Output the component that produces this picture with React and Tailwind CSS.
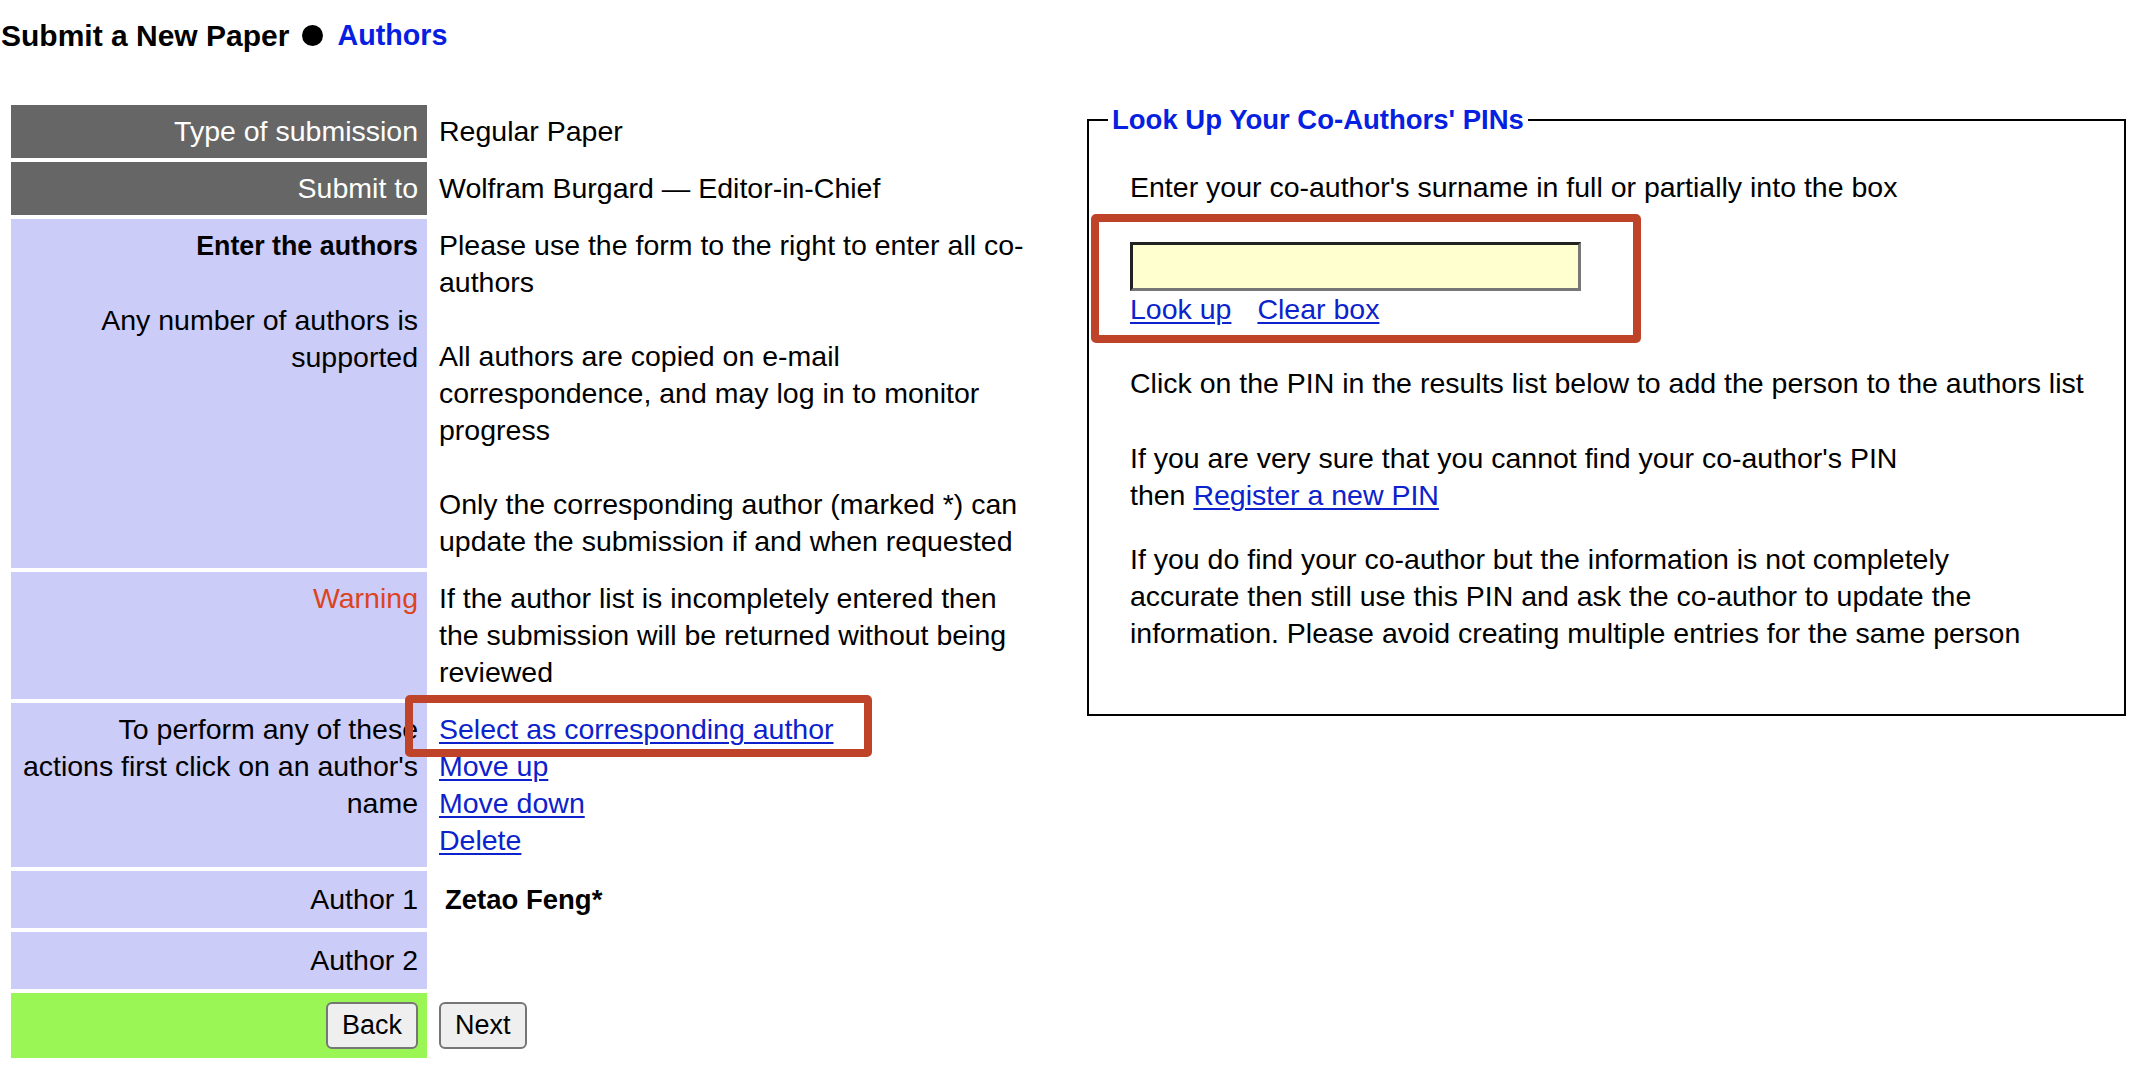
import React from "react";

const FONT = "font-['Liberation_Sans',Arial,Helvetica,sans-serif]";

function Label({ children, bg = "bg-[#ccccf8] text-black", className = "" }) {
  return (
    <div className={`${bg} text-right pr-[9px] pl-[8px] py-[7.8px] whitespace-nowrap ${className}`}>
      {children}
    </div>
  );
}

function Value({ children, className = "" }) {
  return <div className={`pl-[8px] py-[7.8px] whitespace-nowrap ${className}`}>{children}</div>;
}

function Link({ children, className = "" }) {
  return (
    <a href="#" className={`text-[#0b22cc] underline decoration-[2px] underline-offset-[3px] ${className}`}>
      {children}
    </a>
  );
}

export default function App() {
  return (
    <div className={`relative min-h-[1076px] w-[2146px] bg-white text-black text-[28.5px] leading-[37px] ${FONT}`}>
      <h1 className="flex items-center pt-[17px] pl-[1px] text-[30px] leading-[37px] font-bold">
        <span>Submit a New Paper</span>
        <span className="ml-[13px] mr-[14px] inline-block h-[21px] w-[21px] rounded-full bg-black" aria-label="●" />
        <span className="text-[28.7px] text-[#0520e0]">Authors</span>
      </h1>

      <div className="mt-[51px] flex items-start">
        {/* Left table */}
        <div className="ml-[11px] grid w-[1076px] grid-cols-[416px_1fr] gap-x-[4px] gap-y-[4.4px]">
          <Label bg="bg-[#666666] text-white">Type of submission</Label>
          <Value>Regular Paper</Value>

          <Label bg="bg-[#666666] text-white">Submit to</Label>
          <Value>Wolfram Burgard — Editor-in-Chief</Value>

          <Label>
            <span className="text-[26.8px] font-bold">Enter the authors</span>
            <br />
            <br />
            Any number of authors is
            <br />
            supported
          </Label>
          <Value>
            Please use the form to the right to enter all co-
            <br />
            authors
            <br />
            <br />
            All authors are copied on e-mail
            <br />
            correspondence, and may log in to monitor
            <br />
            progress
            <br />
            <br />
            Only the corresponding author (marked *) can
            <br />
            update the submission if and when requested
          </Value>

          <Label>
            <span className="text-[#dc4420]">Warning</span>
          </Label>
          <Value>
            If the author list is incompletely entered then
            <br />
            the submission will be returned without being
            <br />
            reviewed
          </Value>

          <Label>
            To perform any of these
            <br />
            actions first click on an author's
            <br />
            name
          </Label>
          <Value className="flex flex-col items-start">
            <Link>Select as corresponding author</Link>
            <Link>Move up</Link>
            <Link>Move down</Link>
            <Link>Delete</Link>
          </Value>

          <Label className="flex h-[56.7px] items-center justify-end">Author 1</Label>
          <div className="flex h-[56.7px] items-center pl-[14px] text-[27.5px] font-bold">Zetao Feng*</div>

          <Label className="flex h-[56.7px] items-center justify-end">Author 2</Label>
          <div className="h-[56.7px]" />

          <div className="flex h-[64.7px] items-center justify-end bg-[#99f655] pr-[9px]">
            <button className="h-[47px] rounded-[6px] border-[2px] border-[#767676] bg-[#efefef] px-[14px] text-[27px] leading-none">
              Back
            </button>
          </div>
          <div className="flex h-[64.7px] items-center pl-[8px]">
            <button className="h-[47px] rounded-[6px] border-[2px] border-[#767676] bg-[#efefef] px-[14px] text-[27px] leading-none">
              Next
            </button>
          </div>
        </div>

        {/* Right fieldset */}
        <fieldset className="mt-[-4px] w-[1039px] border-2 border-black pl-[19px] pr-[20px] pb-[62px]">
          <legend className="px-[4px] text-[27.5px] font-bold text-[#0520e0]">Look Up Your Co-Authors' PINs</legend>
          <div className="pl-[22px] pt-[31px] whitespace-nowrap">
            <div>Enter your co-author's surname in full or partially into the box</div>
            <input
              type="text"
              className="mt-[36px] block h-[49px] w-[451px] border-[3px] border-t-[#222222] border-l-[#222222] border-r-[#777777] border-b-[#777777] bg-[#ffffd0] outline-none"
            />
            <div className="flex gap-[26px]">
              <Link>Look up</Link>
              <Link>Clear box</Link>
            </div>
            <div className="mt-[37px]">
              Click on the PIN in the results list below to add the person to the authors list
            </div>
            <div className="mt-[38px]">
              If you are very sure that you cannot find your co-author's PIN
              <br />
              then <Link>Register a new PIN</Link>
            </div>
            <div className="mt-[27px]">
              If you do find your co-author but the information is not completely
              <br />
              accurate then still use this PIN and ask the co-author to update the
              <br />
              information. Please avoid creating multiple entries for the same person
            </div>
          </div>
        </fieldset>
      </div>

      {/* Red annotation boxes */}
      <div className="pointer-events-none absolute left-[405px] top-[695px] h-[62px] w-[467px] rounded-[5px] border-[8px] border-[#bf4329]" />
      <div className="pointer-events-none absolute left-[1091px] top-[214px] h-[129px] w-[550px] rounded-[5px] border-[8px] border-[#bf4329]" />
    </div>
  );
}
